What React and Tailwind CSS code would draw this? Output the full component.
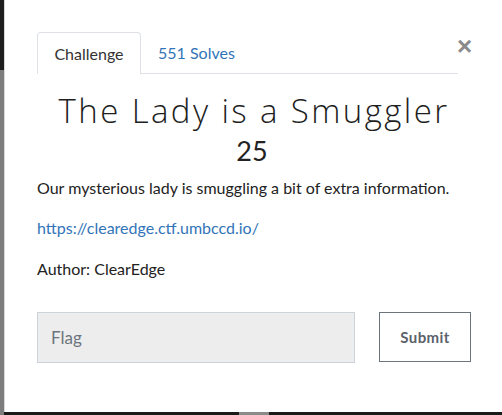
import React from 'react';

const App = () => {
  return (
    <div className="flex w-[502px] h-[415px] bg-[#1c1c1c] overflow-hidden" style={{ fontFamily: 'Lato, "Noto Sans", sans-serif' }}>
      {/* backdrop edge */}
      <div className="flex flex-col w-[4px] shrink-0">
        <div className="h-[70px] bg-[#1e1e1e]" />
        <div className="flex-1 bg-[#7d7d7d]" />
      </div>

      <div className="flex flex-col flex-1">
        {/* Modal */}
        <div className="h-[412px] bg-white border-l border-[#d8d8d8] pl-[32px] pr-[32px] pt-[32px]">
          <div className="flex items-start">
            <div className="flex flex-1 border-b border-[#dee2e6] h-[42px]">
              <div className="w-[104px] h-[42px] border border-b-0 border-[#dee2e6] rounded-t-[4px] bg-white flex items-center justify-center text-[16px] text-[#333] -mb-px">
                Challenge
              </div>
              <div className="flex items-center pl-[17px] text-[16px] text-[#3274b8]">551 Solves</div>
            </div>
            <div className="w-[13px] relative">
              <span className="absolute left-[-1px] top-[1px] text-[26px] font-bold leading-none text-[#8a8a8a]" style={{ fontFamily: '"Liberation Sans", sans-serif' }}>×</span>
            </div>
          </div>

          <h1 className="text-center text-[33px] leading-none mt-[20px] text-[#1e1e1e] tracking-[2.4px] font-light" style={{ fontFamily: '"Open Sans", sans-serif' }}>
            The Lady is a Smuggler
          </h1>
          <div className="text-center text-[27px] leading-none mt-[10px] text-[#222] pr-[4px]">25</div>

          <p className="mt-[14px] text-[16px] text-[#222] leading-[20px]">
            Our mysterious lady is smuggling a bit of extra information.
          </p>
          <p className="mt-[20px] text-[16px] leading-[20px]">
            <a className="text-[#3274b8]">https://clearedge.ctf.umbccd.io/</a>
          </p>
          <p className="mt-[21px] text-[16px] text-[#222] leading-[20px]">Author: ClearEdge</p>

          <div className="flex mt-[33px] gap-[24px]">
            <div className="w-[318px] h-[51px] bg-[#ededed] border border-[#cdd3da] flex items-center pl-[13px] text-[17px] text-[#6c757d]">
              Flag
            </div>
            <div className="w-[92px] h-[50px] border border-[#6c757d] flex items-center justify-center text-[15px] font-bold text-[#5b626a] tracking-[0.4px]">
              Submit
            </div>
          </div>
        </div>
        {/* bottom backdrop */}
        <div className="flex h-[3px] bg-[#1a1a1a]">
          <div className="w-[235px]" />
          <div className="w-[30px] bg-[#8a8a8a]" />
        </div>
      </div>
    </div>
  );
};

export default App;
